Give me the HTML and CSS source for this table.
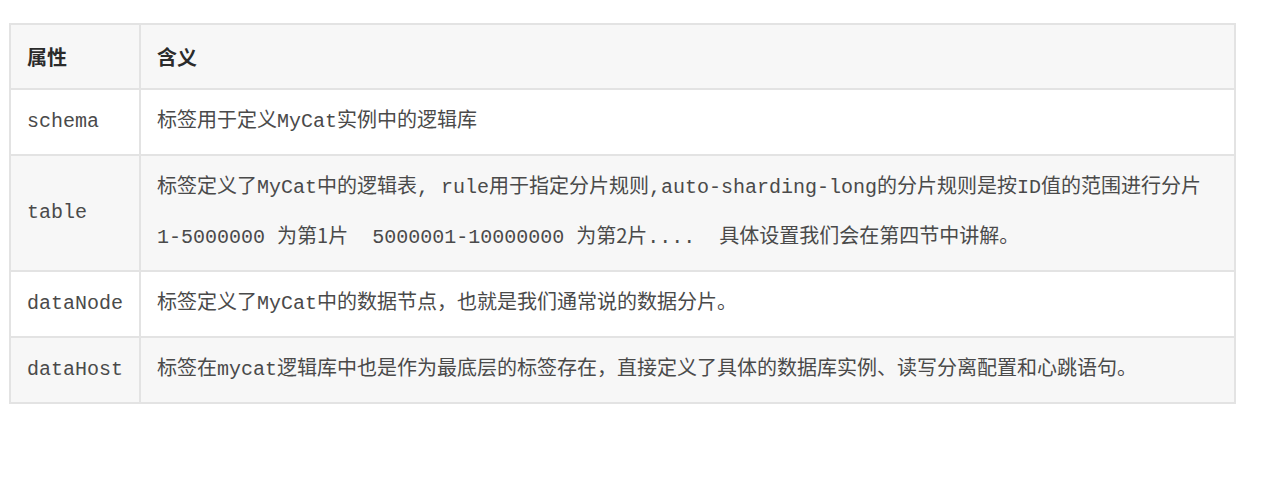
FILE: index.html
```html
<!DOCTYPE html>
<html lang="zh">
<head>
<meta charset="utf-8">
<link rel="stylesheet" href="styles.css">
</head>
<body>
<table class="attr-table">
  <colgroup>
    <col class="col-name">
    <col class="col-desc">
  </colgroup>
  <thead>
    <tr><th>属性</th><th>含义</th></tr>
  </thead>
  <tbody>
    <tr><td>schema</td><td>标签用于定义MyCat实例中的逻辑库</td></tr>
    <tr><td>table</td><td>标签定义了MyCat中的逻辑表, rule用于指定分片规则,auto-sharding-long的分片规则是按ID值的范围进行分片<br>1-5000000 <span class="sans">为第1片</span>&nbsp; 5000001-10000000 <span class="sans">为第2片</span>....&nbsp; 具体设置我们会在第四节中讲解。</td></tr>
    <tr><td>dataNode</td><td>标签定义了MyCat中的数据节点，也就是我们通常说的数据分片。</td></tr>
    <tr><td>dataHost</td><td>标签在mycat逻辑库中也是作为最底层的标签存在，直接定义了具体的数据库实例、读写分离配置和心跳语句。</td></tr>
  </tbody>
</table>
</body>
</html>
```
FILE: styles.css
```css
html, body {
  margin: 0;
  padding: 0;
  background: #ffffff;
}

body {
  padding: 23px 0 0 9px;
}

.attr-table {
  border-collapse: collapse;
  table-layout: fixed;
  width: 1227px;
  font-family: "Liberation Mono", "Noto Sans CJK SC", monospace;
  font-size: 20px;
  color: #4a4a4a;
  border: 2px solid #e3e3e3;
}

.col-name {
  width: 130px;
}

.attr-table th,
.attr-table td {
  border: 2px solid #e3e3e3;
  padding: 7px 16px;
  line-height: 50px;
  text-align: left;
  vertical-align: middle;
  white-space: nowrap;
}

.attr-table th {
  font-family: "Noto Sans CJK SC", sans-serif;
  font-weight: 700;
  font-size: 20px;
  line-height: 49px;
  color: #2b2b2b;
  background: #f7f7f7;
}

.attr-table tbody tr:nth-child(even) td {
  background: #f7f7f7;
}

.sans {
  font-family: "Noto Sans CJK SC", sans-serif;
  line-height: 1;
}
```
